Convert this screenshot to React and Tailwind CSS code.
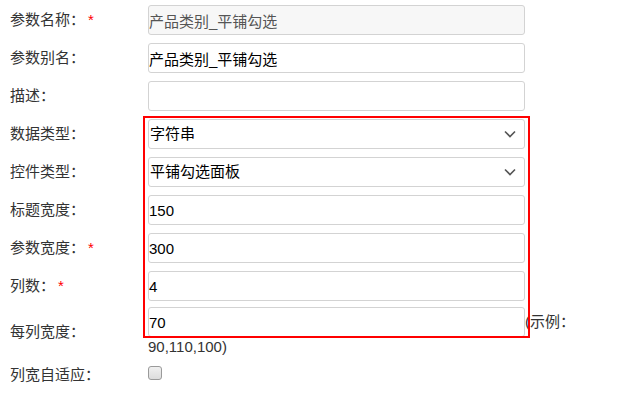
import React from "react";

const font = "font-['Liberation_Sans','Noto_Sans_CJK_SC',sans-serif]";

const Chevron = () => (
    <svg width="12" height="8" viewBox="0 0 12 8" className="shrink-0">
        <path d="M1 1.5 L6 6.5 L11 1.5" fill="none" stroke="#555" strokeWidth="1.6" />
    </svg>
);

const Label = ({ text, required }) => (
    <div className="w-[148px] shrink-0 pl-[10px] text-[15px] text-[#333] flex items-center">
        <span>{text}</span>
        {required && <span className="ml-[3px] text-[#ff0000]">*</span>}
    </div>
);

const TextBox = ({ value, disabled }) => (
    <input
        readOnly
        value={value}
        className={
            "w-[377px] h-[30px] px-0 text-[15px] border border-[#d3d3d3] rounded-[3px] outline-none " +
            (disabled ? "bg-[#f7f7f7] text-[#555]" : "bg-white text-black")
        }
    />
);

const SelectBox = ({ value }) => (
    <div className="w-[377px] h-[30px] flex items-center justify-between pr-[8px] text-[15px] text-black border border-[#d3d3d3] rounded-[3px] bg-white">
        <span className="pl-[1px]">{value}</span>
        <Chevron />
    </div>
);

const Row = ({ label, required, children }) => (
    <div className="flex items-center h-[38px]">
        <Label text={label} required={required} />
        {children}
    </div>
);

export default function App() {
    return (
        <div className={"relative w-[631px] h-[407px] bg-white pt-[1px] overflow-hidden " + font}>
            <Row label="参数名称：" required>
                <TextBox value="产品类别_平铺勾选" disabled />
            </Row>
            <Row label="参数别名：">
                <TextBox value="产品类别_平铺勾选" />
            </Row>
            <Row label="描述：">
                <TextBox value="" />
            </Row>
            <Row label="数据类型：">
                <SelectBox value="字符串" />
            </Row>
            <Row label="控件类型：">
                <SelectBox value="平铺勾选面板" />
            </Row>
            <Row label="标题宽度：">
                <TextBox value="150" />
            </Row>
            <Row label="参数宽度：" required>
                <TextBox value="300" />
            </Row>
            <Row label="列数：" required>
                <TextBox value="4" />
            </Row>
            <div className="flex items-center pt-[2px]">
                <Label text="每列宽度：" />
                <div className="text-[15px] text-[#333]">
                    <div className="flex items-center">
                        <TextBox value="70" />
                        <span>(示例：</span>
                    </div>
                    <div className="leading-[20px]">90,110,100)</div>
                </div>
            </div>
            <div className="flex items-center h-[36px]">
                <Label text="列宽自适应：" />
                <div className="w-[14px] h-[14px] rounded-[3px] border border-[#9a9a9a] bg-gradient-to-b from-[#f0f0f0] to-[#dcdcdc] -mt-[4px]" />
            </div>

            <div className="absolute left-[143px] top-[116px] w-[387px] h-[222px] border-2 border-[#ff0000] pointer-events-none" />
        </div>
    );
}
